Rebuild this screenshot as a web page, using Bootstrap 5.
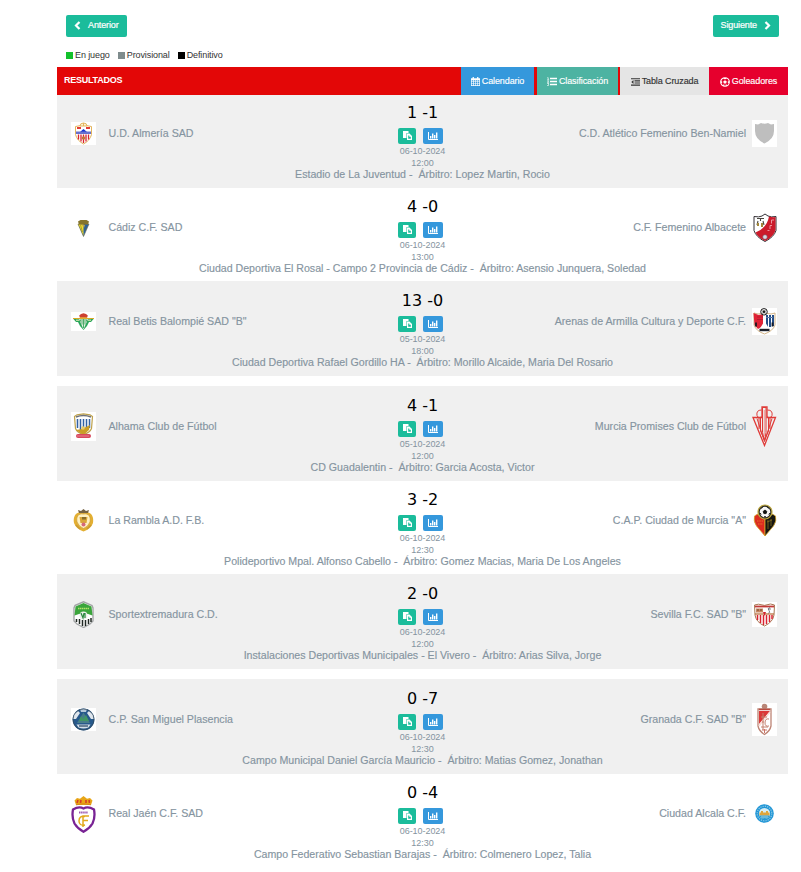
<!DOCTYPE html>
<html lang="es">
<head>
    <meta charset="UTF-8">
    <meta name="viewport" content="width=device-width, initial-scale=1.0">
    <title>Resultados</title>
    <link href="https://cdn.jsdelivr.net/npm/bootstrap@5.3.0/dist/css/bootstrap.min.css" rel="stylesheet">
    <style>
        body {
            font-family: "Liberation Sans", Arial, sans-serif;
            font-size: 11px;
            color: #333;
            background: #fff;
        }
        .page {
            width: 731px;
            margin-left: 57px;
            padding-top: 15px;
        }
        .nav-buttons {
            padding: 0 9px;
        }
        .btn-nav {
            --bs-btn-color: #fff;
            --bs-btn-bg: #1bbc9b;
            --bs-btn-border-color: #1bbc9b;
            --bs-btn-hover-color: #fff;
            --bs-btn-hover-bg: #16a085;
            height: 22px;
            padding: 0 8px 2px;
            font-size: 9px;
            letter-spacing: -.12px;
            line-height: 1;
            border: 0;
            border-radius: 2px;
            gap: 7px;
            -webkit-text-stroke: .2px;
        }
        .legend {
            height: 24px;
            margin-top: 6px;
            padding-left: 9px;
            font-size: 9px;
            letter-spacing: -.1px;
            line-height: 24px;
        }
        .legend i {
            width: 7px;
            height: 7px;
            margin-right: 2px;
        }
        .legend span {
            margin-right: 8px;
        }
        .results-bar {
            height: 28px;
            background: #e30707;
            z-index: 1;
        }
        .results-title {
            padding-left: 7px;
            font-size: 9px;
            letter-spacing: -.25px;
            line-height: 26px;
            color: #fff;
        }
        .tab-link {
            height: 28px;
            padding-top: 1px;
            font-size: 9px;
            letter-spacing: -.1px;
            color: #fff;
            text-decoration: none;
            -webkit-text-stroke: .15px;
        }
        .tab-link svg {
            margin-right: 2px;
        }
        .tab-cal { width: 73px; background: #3598dc; margin-right: 3px; }
        .tab-cla { width: 81px; background: #4db3a2; margin-right: 2px; }
        .tab-cru { width: 89px; background: #e5e5e5; color: #333; }
        .tab-gol { width: 79px; background: #e6002d; }
        .match-group {
            margin-bottom: 11px;
        }
        .match-group:first-child {
            margin-top: -1px;
        }
        .match {
            height: 94px;
            color: #8594a0;
        }
        .match.striped {
            background: #f0f0f0;
            box-shadow: 0 -1px 0 #f0f0f0;
        }
        .match-top {
            height: 74px;
        }
        .team {
            width: 320px;
            height: 79px;
        }
        .team-home { padding-left: 14px; }
        .team-away { padding-right: 11px; }
        .crest {
            width: 25px;
            display: flex;
            justify-content: center;
        }
        .team-home .crest { margin-right: 12.5px; }
        .team-away .crest { margin-left: 6px; }
        .team-name {
            font-size: 10.63px;
            white-space: nowrap;
            -webkit-text-stroke: .15px;
        }
        .score {
            padding-top: 9px;
            font-family: "DejaVu Sans", sans-serif;
            font-size: 16px;
            line-height: 20px;
            color: #000;
            white-space: pre;
        }
        .btn-pair {
            gap: 7px;
            margin: 5px 4px 1px 0;
        }
        .btn-tiny {
            height: 16px;
            padding: 0 0 1px;
            border: 0;
            border-radius: 2px;
            color: #fff;
            display: flex;
            align-items: center;
            justify-content: center;
        }
        .btn-acta { width: 18px; background: #1bbc9b; }
        .btn-stats { width: 20px; background: #3598dc; }
        .match-date {
            font-size: 9px;
            letter-spacing: -.05px;
            line-height: 12px;
        }
        .venue {
            font-size: 10.61px;
            line-height: 12px;
            white-space: pre;
            -webkit-text-stroke: .15px;
        }
    </style>
</head>
<body>
    <!-- icons -->
    <svg class="d-none">
        <symbol id="i-left" viewBox="0 0 7 9"><path d="M5.5 1 2 4.5 5.500 8" fill="none" stroke="#fff" stroke-width="2.200"/></symbol>
        <symbol id="i-right" viewBox="0 0 7 9"><path d="M1.500 1 5 4.500 1.500 8" fill="none" stroke="#fff" stroke-width="2.200"/></symbol>
        <symbol id="i-cal" viewBox="0 0 9 9"><path fill="#fff" fill-rule="evenodd" d="M0 1.2h1.6V0h1.3v1.2h3.2V0h1.3v1.2H9V9H0zM.7 3.2v1.3H2V3.2zm2 0v1.3h1.5V3.2zm2.1 0v1.3h1.5V3.2zm2.1 0v1.3h1.4V3.2zM.7 5v1.4H2V5zm2 0v1.4h1.5V5zm2.1 0v1.4h1.5V5zm2.1 0v1.4h1.4V5zM.7 7v1.3H2V7zm2 0v1.3h1.5V7zm2.1 0v1.3h1.5V7zm2.1 0v1.3h1.4V7z"/></symbol>
        <symbol id="i-list" viewBox="0 0 10 9"><path d="M3 1.5h7M3 4.5h7M3 7.5h7" stroke="#fff" stroke-width="1.4"/><path d="M.3.7h.9v2M.2 2.8h1.9M.2 4h1.6L.4 5.3h1.7M.2 6.5h1.6L1 7.2l.8.6-.4.8H.1" fill="none" stroke="#fff" stroke-width=".7"/></symbol>
        <symbol id="i-indent" viewBox="0 0 9 8"><path d="M0 .8h9M3.5 2.9H9M3.5 5H9M0 7.1h9" stroke="#333" stroke-width="1.1"/><path d="M2.5 2v4L.3 4z" fill="#333"/></symbol>
        <symbol id="i-ball" viewBox="0 0 10 10"><circle cx="5" cy="5" r="4.3" fill="none" stroke="#fff" stroke-width="1.1"/><path d="m5 3.3 1.8 1.3-.7 2H3.9l-.7-2zM2.800 1 5 2.400 7.200 1zM.7 3.700l.2 3L2.500 5zM9.3 3.700l-.2 3L7.500 5zM2.300 8.300l2.200.9-.3-2zM7.700 8.300l-2.200.9.300-2z" fill="#fff"/></symbol>
        <symbol id="i-acta" viewBox="0 0 9 9"><path d="M0 0h5.500v2H3.500v5H0z" fill="#fff"/><path fill="#fff" fill-rule="evenodd" d="M4 2.500h2.500L9 5v4H4zM5.200 4.500v3.300h2.600V5.700H6.300V4.500z"/></symbol>
        <symbol id="i-stats" viewBox="0 0 10 8"><path d="M.5 0v7.500H10" fill="none" stroke="#fff"/><path d="M2.700 6.500V4M4.700 6.500V1.500M6.700 6.500V3M8.700 6.500V.5" stroke="#fff" stroke-width="1.400"/></symbol>
    </svg>

    <div class="page">
        <div class="nav-buttons d-flex justify-content-between">
            <button class="btn btn-nav d-flex align-items-center"><svg width="7" height="9"><use href="#i-left"/></svg>Anterior</button>
            <button class="btn btn-nav d-flex align-items-center">Siguiente<svg width="7" height="9"><use href="#i-right"/></svg></button>
        </div>

        <div class="legend d-flex align-items-center">
            <i style="background:#12c12b"></i><span>En juego</span>
            <i style="background:#7f8c8d"></i><span>Provisional</span>
            <i style="background:#000"></i><span>Definitivo</span>
        </div>

        <div class="results-bar d-flex position-relative">
            <div class="results-title fw-bold me-auto">RESULTADOS</div>
            <a href="#" class="tab-link tab-cal d-flex align-items-center justify-content-center"><svg width="9" height="9"><use href="#i-cal"/></svg>Calendario</a>
            <a href="#" class="tab-link tab-cla d-flex align-items-center justify-content-center"><svg width="10" height="9"><use href="#i-list"/></svg>Clasificación</a>
            <a href="#" class="tab-link tab-cru d-flex align-items-center justify-content-center"><svg width="9" height="8"><use href="#i-indent"/></svg>Tabla Cruzada</a>
            <a href="#" class="tab-link tab-gol d-flex align-items-center justify-content-center"><svg width="10" height="10"><use href="#i-ball"/></svg>Goleadores</a>
        </div>

        <div id="results"></div>
    </div>

    <script src="https://cdn.jsdelivr.net/npm/bootstrap@5.3.0/dist/js/bootstrap.bundle.min.js"></script>
    <script>
        // club crests: [width, height, svg content]
        const crests = {
            almeria: [25, 23, `<path fill="#fff" d="M0 0h25v23H0z"/><path d="M4.5 4.5 12.5 3l8 1.5v8q-1.5 6-8 9.5-6.5-3.5-8-9.5z" fill="#fff" stroke="#e3b45c"/><path d="M9 4q0-3 3.5-3T16 4zM12.5 1v3" fill="#fff4d8" stroke="#e3b45c"/><path d="M6 6h4M15 6h4" stroke="#e33b35" stroke-width="2"/><path d="m9 10 3.5-3 3.5 3z" fill="#1731d2"/><path d="M5 9.5h15V12H5z" fill="#6770ce"/><path d="M7.5 12.5v5M10 12.5v7M12.5 12.5V21M15 12.5v7M17.5 12.5v5" stroke="#d9232e" stroke-width="1.3"/><circle cx="12.5" cy="16" r="1.8" fill="#c17a38"/>`],
            cadiz: [13, 18, `<path d="M1 5h11L6.5 17.5z" fill="#2460a8"/><path d="M1 5h5.5v12z" fill="#efdc2c"/><path d="m3.500 6 2 7M9 7l-1 5" stroke="#6d6630" stroke-width=".5"/><path d="M1 5h11L6.5 17.5z" fill="none" stroke="#6f6a48" stroke-width=".6"/><path d="M1 2.5 3.5 1h6L12 2.500 11 5.500H2z" fill="#85742c"/><path d="M5 6h3l-1 3z" fill="#b9a550"/>`],
            betis: [25, 19, `<path fill="#fff" d="M0 0h25v19H0z"/><path d="M2 6.5h21l-3 3.5h-2l-2 4-3.500 4L9 14l-2-4H5z" fill="#2aa65a"/><path d="M2 6.5h21" stroke="#d9a928"/><path d="M8 7h9l-4.5 10.5z" fill="#e8f3e4"/><path d="M11 7v5.5M12.5 7v9M14 7v5.5M9.5 7.5v2M15.5 7.5v2" stroke="#27984d" stroke-width=".8"/><path d="M5 8.2h3M17 8.2h3" stroke="#f7efbc"/><path d="m9 6-.8-2.5L10 2l2.5-.8L15 2l1.8 1.5L16 6z" fill="#cd4030"/><path d="M9 5.8h7" stroke="#e9b53c"/>`],
            alhama: [25, 29, `<path fill="#fff" d="M0 0h25v29H0z"/><path d="M3.5 4.5 6 2.8l6.5-1 6.5 1 2.5 1.7-1 12q-1.5 4-8 6-6.5-2-8-6z" fill="#fff" stroke="#bfa24c" stroke-width="1.2"/><path d="M5 5q7.5-3 15 0" fill="none" stroke="#6d7078" stroke-width="1.5"/><path d="M6.5 7v9M9.5 7v11M12.5 7v11M15.5 7v11M18.5 7v9" stroke="#3161a4" stroke-width="1.5"/><path d="m5 18 6-1 8-4-1 5-5.5 5z" fill="#ca9e27"/><circle cx="12" cy="16" r="1.8" fill="#e9cb66"/><rect x="5" y="22" width="15" height="4" rx="2" fill="#d7475d"/><path d="M6.500 24h12" stroke="#f4bac0" stroke-dasharray="1 1"/>`],
            rambla: [21, 25, `<path d="M10.5 4C2 3 0 9 1 15q2 6 9.5 8.5Q18 21 20 15c1-6-1-12-9.5-11z" fill="#e3af32"/><path d="M10.5 6C5 5 3 9 4 14q2 5 6.5 6.5Q15 19 17 14c1-5-1-9-6.5-8z" fill="#fff1c1" stroke="#c89a35" stroke-width=".7"/><path d="m6 5-1-3 3 1 2.5-2L13 3l3-1-1 3z" fill="#756344"/><path d="M6.500 9h8l-1 6h-6z" fill="#d9a63a"/><path d="M9 9h4v2.500H9z" fill="#8a6e2b"/><circle cx="10.5" cy="16.500" r="2" fill="#d5687c"/><path d="m3 17 4 4M18 17l-4 4" stroke="#c99a32" stroke-width="1.5"/>`],
            sport: [21, 27, `<path d="M2 4.5 10.5.8 19 4.5 20 7v13l-3 3-6.5 3.5L4 23l-3-3V7z" fill="#fff" stroke="#a4a6a7" stroke-width="1.4"/><path d="m2.5 5.5 8-3.5 8 3.500 1 9q-9-4-18 0z" fill="#3ba53c"/><path d="M5 7.5h11" stroke="#b2e56a" stroke-width="1.5" stroke-dasharray="1.5 .5"/><path d="M3.5 18v3M6.5 18v5M9.5 19v6M12.5 19v6M15.5 18v5M18 17v4" stroke="#202823" stroke-width="1.5"/><circle cx="10.5" cy="14.5" r="4" fill="#e9eee9"/><path d="m8 12 2 5 1-5M12 12v5" fill="none" stroke="#26863c" stroke-width="1.2"/>`],
            miguel: [25, 23, `<path fill="#fff" d="M0 0h25v23H0z"/><circle cx="12.5" cy="11.5" r="10.9" fill="#27598b"/><path d="m3 6 4-3 2 2-4 6H2zM22 6l-4-3-2 2 4 6h3z" fill="#dfe6ed"/><path d="M9 1h7l-1 3h-5z" fill="#b6c8d9"/><path d="M12.5 4.5 19 15H6z" fill="#477d89"/><path d="m8 13 2-5 2 3 3-4 3 6z" fill="#419665"/><path d="M5.5 16.5h14l-2 3q-5 2-10 0z" fill="#d6dfe7"/><path d="M8 18h9" stroke="#3b5974" stroke-width="1.4"/><circle cx="12.5" cy="11.5" r="10.5" fill="none" stroke="#344757" stroke-width=".7"/>`],
            jaen: [25, 38, `<path d="M5 10 3.5 5.5 6 3l3 .8L12.5 1 16 3.8l3-.8 2.5 2.5L20 10z" fill="#e8a617"/><path d="m6 8 1-3M9.5 8l.5-3M15 8V5M18.5 8 18 5" stroke="#d53d26" stroke-width="1.600"/><path d="M5 9.8q7.5-2 15 0" fill="none" stroke="#d68519"/><path d="M12.500 13.500Q8 11 2 14.500q-1.500 8 1.500 14 3 5 9 8.300 6-3.300 9-8.300 3-6 1.500-14-6-3.500-10.500-1z" fill="#fff" stroke="#792394" stroke-width="2.300"/><path d="M8 17.500h9" stroke="#9b59b0" stroke-width="1.800" stroke-dasharray="1.500 .6"/><path d="M14 21.500q-6-1-6 4.500 0 5 6 4M12 32V21h6M12 25.500h5" fill="none" stroke="#e2a91d" stroke-width="1.500"/>`],
            generic: [25, 27, `<path fill="#fff" d="M0 0h25v27H0z"/><path d="m3 4 3 .5L9 3q3.5 1.5 7 0l3 1.5L22 4v7q0 8-9.500 12.500Q3 19 3 11z" fill="#bebebe"/>`],
            albacete: [24, 30, `<path d="M1 3.5q5 1 8-.5l3-2 3 2q3 1.5 8 .5v14Q21 24 12 28.5 3 24 1 17.5z" fill="#fff" stroke="#353136"/><path d="M16 3.500q4 1 6.500.5V17Q21 23.500 12 28 5 24.500 2.500 19.500 14 15 16 3.500z" fill="#cb1b2b"/><path d="M4 5.5h7M7.5 5v3M5 8l-1 4M10 8l1 4" stroke="#494740" stroke-width="1.1"/><path d="M5 10v3M9 10v4" stroke="#a28739" stroke-width="2"/><path d="M18.500 7h2.500M18.500 7v3.500M17 12.500h2M17 12.500v3.500M14.500 17.500h2" stroke="#f0a4ab" stroke-width=".9" fill="none"/><circle cx="12" cy="24" r="2.3" fill="#d6d6df" stroke="#7c4d61" stroke-width=".6"/>`],
            arenas: [25, 27, `<path fill="#fff" d="M0 0h25v27H0z"/><path d="m2 5 4 1 6.5-1 6.500 1 4-1v12q-2 6-10.500 9Q4 23 2 17z" fill="#fff" stroke="#c9a36c" stroke-width=".8"/><path d="m1.500 5 5 2 4.500-1v12l-5 3-3.500-4z" fill="#e02336"/><path d="M15 7v12M18 7v12M21 7v11" stroke="#234d87" stroke-width="2"/><path d="M5 9h6M5 11.500h6" stroke="#b51c30"/><path d="M14 9.500h7" stroke="#5878a5"/><path d="m12.500 9 1.200 6 3 5H8.300l3-5z" fill="#fff"/><path d="M4 14.500v4M20.500 14.500v4" stroke="#171a22" stroke-width="1.800"/><path d="M7.500 22h10" stroke="#1c202a" stroke-width="2.400"/><circle cx="12" cy="3.8" r="3.3" fill="#f0f0f0" stroke="#141414" stroke-width=".9"/><path d="m12 2.500 1.200 1-.5 1.300h-1.400l-.5-1.300zM9.500 2h1M13.500 2h1M10 6h1M13 6h1" fill="#111" stroke="#111" stroke-width=".7"/>`],
            murcia: [25, 41, `<path d="m1 11.5 11.500 28L23.500 11.500H15V1h-5v10.500z" fill="none" stroke="#df3a37" stroke-width="1.300"/><path d="M10.500 1.500h3.500v25l-1.500 8-2-8zM9.500 4Q4 4 5 9.500q2 4 4 1M15.500 4Q21 4 20 9.500q-2 4-4.500 1M7 12v11M18 12v11M5 12.500l7.500 23M20 12.500l-7.500 23M8.500 12v13l4 9 4-9V12" fill="none" stroke="#df3a37"/><path d="M12.300 4v26" stroke="#e78680" stroke-width=".8"/>`],
            cap: [24, 33, `<path d="M12 11Q6 8 1.5 12q-1.5 5 2 10L12 32z" fill="#dc2b20" stroke="#d5a72c" stroke-width=".8"/><path d="M12 11q6-3 10.5 1 1.5 5-2 10L12 32z" fill="#171611" stroke="#d5a72c" stroke-width=".8"/><path d="M4 17h6M5 20h5" stroke="#e5732b" stroke-width="1" stroke-dasharray="1.5 .8"/><path d="M15 16v9M18 15v7M14 18l5-2" stroke="#877020" stroke-width=".8"/><circle cx="12" cy="8" r="7" fill="#28271f" stroke="#bda841" stroke-width="1.2"/><circle cx="12" cy="8" r="5.300" fill="#f7f7f7"/><path d="m12 6 1.800 1.400-.7 2.200h-2.200l-.7-2.200zM8.300 4.500l1.500-1.200M14.200 3.300l1.500 1.200M7.300 9l.8 1.700M16.700 9l-.8 1.700M11 12.700h2" fill="#111" stroke="#111" stroke-width=".9"/>`],
            sevilla: [25, 25, `<path fill="#fff" d="M0 0h25v25H0z"/><path d="m2.500 3 4-.8 6 1.200L18.500 2l4 1-.5 10q-1 7-9.500 11Q4 20 3 13z" fill="#fff" stroke="#a87853"/><path d="M5.500 13v5M8.500 13v8M11.500 13v10M14.500 13v9M17.500 13v7M20 13v4" stroke="#d92430" stroke-width="1.5"/><path d="M3 4.500h19" stroke="#c23a38" stroke-width="1.8"/><path d="M4 6.5h7v4H4z" fill="#c88763"/><path d="M5 8h2M8 8h2" stroke="#8c5b3d" stroke-width="1.600"/><path d="M18 5.5q-3 1-1 3t-1 3M16 7h3" fill="none" stroke="#5d6068" stroke-width=".8"/><path d="M3 12h19" stroke="#ba713e" stroke-width="1.3"/><path d="m11 10 3 0-1.500 4z" fill="#d3202d"/>`],
            granada: [25, 33, `<path fill="#fff" d="M0 0h25v33H0z"/><path d="M6 6h13v17q-1 5-6.5 8.5Q7 28 6 23z" fill="#fff" stroke="#bd8475" stroke-width="1.3"/><path d="M7 8h11L7 21z" fill="#da3837"/><circle cx="12.500" cy="3.500" r="2.800" fill="#b98677"/><path d="M7 6.5h11" stroke="#bb4b40" stroke-width="1.5"/><path d="M18 9 7 23" stroke="#f9ddd5" stroke-width="1.3"/><path d="M11 10v10M9 14h6M17 16q-4-1-4 4 0 4 4 3M11 18v9M9 24h7" fill="none" stroke="#c3816f"/><path d="M12.5 26v4M10 27h5" stroke="#cc7466"/>`],
            alcala: [19, 19, `<circle cx="9.5" cy="9.5" r="9.3" fill="#2196d6"/><circle cx="9.5" cy="9.5" r="7.3" fill="none" stroke="#8bc7e5" stroke-width="1.2" stroke-dasharray="1.3 1"/><circle cx="9.5" cy="9.5" r="5.6" fill="#d6edf4"/><path d="M4.500 11.500V8.500h1.500V7h2v1.500h3V7h2v1.500h1.500v3z" fill="#dda53c"/><path d="M4.500 11.5h10q-1 3.5-5 3.500t-5-3.500z" fill="#2b9bd0"/><path d="M6 13h7" stroke="#c4e5f0" stroke-width=".8"/>`]
        };

        // home crest, home, away crest, away, home goals, away goals, date, time, venue, referee
        const groups = [
            [
                ['almeria', 'U.D. Almería SAD', 'generic', 'C.D. Atlético Femenino Ben-Namiel', 1, 1, '06-10-2024', '12:00', 'Estadio de La Juventud', 'Lopez Martin, Rocio'],
                ['cadiz', 'Cádiz C.F. SAD', 'albacete', 'C.F. Femenino Albacete', 4, 0, '06-10-2024', '13:00', 'Ciudad Deportiva El Rosal - Campo 2 Provincia de Cádiz', 'Asensio Junquera, Soledad'],
                ['betis', 'Real Betis Balompié SAD "B"', 'arenas', 'Arenas de Armilla Cultura y Deporte C.F.', 13, 0, '05-10-2024', '18:00', 'Ciudad Deportiva Rafael Gordillo HA', 'Morillo Alcaide, Maria Del Rosario']
            ],
            [
                ['alhama', 'Alhama Club de Fútbol', 'murcia', 'Murcia Promises Club de Fútbol', 4, 1, '05-10-2024', '12:00', 'CD Guadalentin', 'Garcia Acosta, Victor'],
                ['rambla', 'La Rambla A.D. F.B.', 'cap', 'C.A.P. Ciudad de Murcia "A"', 3, 2, '06-10-2024', '12:30', 'Polideportivo Mpal. Alfonso Cabello', 'Gomez Macias, Maria De Los Angeles'],
                ['sport', 'Sportextremadura C.D.', 'sevilla', 'Sevilla F.C. SAD "B"', 2, 0, '06-10-2024', '12:00', 'Instalaciones Deportivas Municipales - El Vivero', 'Arias Silva, Jorge']
            ],
            [
                ['miguel', 'C.P. San Miguel Plasencia', 'granada', 'Granada C.F. SAD "B"', 0, 7, '06-10-2024', '12:30', 'Campo Municipal Daniel García Mauricio', 'Matias Gomez, Jonathan'],
                ['jaen', 'Real Jaén C.F. SAD', 'alcala', 'Ciudad Alcala C.F.', 0, 4, '06-10-2024', '12:30', 'Campo Federativo Sebastian Barajas', 'Colmenero Lopez, Talia']
            ]
        ];

        function crest(id) {
            const [w, h, body] = crests[id];
            return `<span class="crest"><svg width="${w}" height="${h}" viewBox="0 0 ${w} ${h}">${body}</svg></span>`;
        }

        document.getElementById('results').innerHTML = groups.map(group => `
            <div class="match-group">
                ${group.map(([hc, home, ac, away, hg, ag, date, time, venue, referee], i) => `
                    <div class="match ${i % 2 ? '' : 'striped'}">
                        <div class="match-top d-flex justify-content-between">
                            <div class="team team-home d-flex align-items-center">${crest(hc)}<span class="team-name">${home}</span></div>
                            <div class="text-center">
                                <div class="score">${hg} -${ag}</div>
                                <div class="btn-pair d-flex justify-content-center">
                                    <button class="btn-tiny btn-acta"><svg width="9" height="9"><use href="#i-acta"/></svg></button>
                                    <button class="btn-tiny btn-stats"><svg width="10" height="8"><use href="#i-stats"/></svg></button>
                                </div>
                                <div class="match-date">${date}<br>${time}</div>
                            </div>
                            <div class="team team-away d-flex align-items-center justify-content-end"><span class="team-name">${away}</span>${crest(ac)}</div>
                        </div>
                        <div class="venue text-center">${venue} -  Árbitro: ${referee}</div>
                    </div>
                `).join('')}
            </div>
        `).join('');
    </script>
</body>
</html>
